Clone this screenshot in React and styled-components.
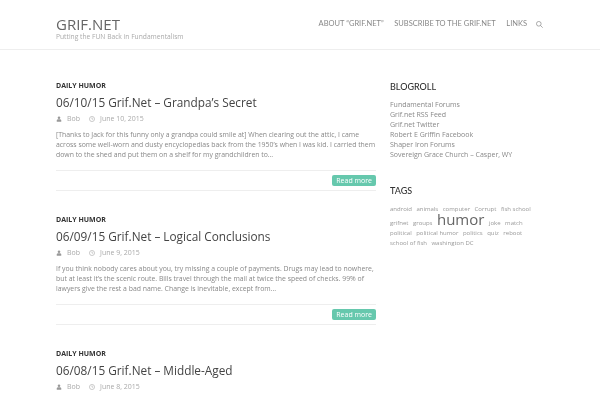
import React from "react";
import styled, { createGlobalStyle } from "styled-components";

const GlobalStyle = createGlobalStyle`
  html, body {
    margin: 0;
    height: 400px;
    overflow: hidden;
    background: #fff;
    font-family: "Open Sans", sans-serif;
  }
`;

const Page = styled.div`
  height: 400px;
  overflow: hidden;
  will-change: opacity;
`;

const Header = styled.header`
  height: 50px;
  box-sizing: border-box;
  padding: 15px 57px 0 56px;
  display: flex;
  justify-content: space-between;
  align-items: flex-start;
  border-bottom: 1px solid #eee;
`;

const Brand = styled.div`
  display: flex;
  flex-direction: column;
`;

const SiteTitle = styled.div`
  font-size: 15px;
  line-height: 18px;
  color: #666;
`;

const Tagline = styled.div`
  font-size: 6.7px;
  line-height: 8px;
  color: #aaa;
`;

const Nav = styled.nav`
  display: flex;
  align-items: center;
  gap: 10.5px;
  padding-top: 2px;
`;

const NavLink = styled.a`
  font-family: "Lato", sans-serif;
  font-size: 7.5px;
  line-height: 14px;
  color: #888;
  text-transform: uppercase;
`;

const SearchButton = styled.span`
  display: flex;
  margin-left: -1.5px;
`;

const Main = styled.main`
  display: grid;
  grid-template-columns: 320px 154px;
  gap: 14px;
  padding: 31px 56px 0;
`;

const Post = styled.article`
  height: 134px;
`;

const Category = styled.div`
  font-size: 7px;
  font-weight: 700;
  line-height: 10px;
  color: #333;
  text-transform: uppercase;
`;

const PostTitle = styled.h2`
  margin: 3px 0 0;
  font-size: 11.8px;
  font-weight: 400;
  line-height: 16px;
  color: #444;
`;

const Meta = styled.div`
  display: flex;
  align-items: center;
  gap: 5px;
  margin-top: 3.5px;
  font-size: 7px;
  line-height: 10px;
  color: #aaa;
`;

const MetaText = styled.span`
  margin-right: 4px;
`;

const Excerpt = styled.p`
  margin: 6.5px 0 0;
  font-size: 6.88px;
  line-height: 10px;
  color: #888;
`;

const ReadRow = styled.div`
  display: flex;
  justify-content: flex-end;
  align-items: center;
  height: 19px;
  margin-top: 10px;
  border-top: 1px solid #eee;
  border-bottom: 1px solid #eee;
`;

const ReadMore = styled.a`
  padding: 0 4px;
  border-radius: 2px;
  background: #66c8ad;
  color: #fff;
  font-size: 7px;
  line-height: 11px;
`;

const Sidebar = styled.aside`
  display: flex;
  flex-direction: column;
  gap: 25.5px;
`;

const WidgetTitle = styled.h3`
  margin: 0 0 6.5px;
  font-family: "Lato", sans-serif;
  font-size: 9px;
  font-weight: 500;
  line-height: 12px;
  color: #333;
  text-transform: uppercase;
`;

const LinkList = styled.ul`
  list-style: none;
  margin: 0;
  padding: 0;
`;

const LinkItem = styled.li`
  font-size: 7px;
  line-height: 10px;
  color: #888;
`;

const TagCloud = styled.div`
  display: flex;
  flex-wrap: wrap;
  align-items: baseline;
  column-gap: 4.5px;
  line-height: 10px;
`;

const Tag = styled.a`
  font-size: ${(p) => (p.$big ? "15px" : "6px")};
  line-height: ${(p) => (p.$big ? "11px" : "10px")};
  color: ${(p) => (p.$big ? "#666" : "#999")};
`;

const UserIcon = () => (
  <svg width="6" height="6" viewBox="0 0 8 8" fill="#999">
    <circle cx="4" cy="2.2" r="1.7" />
    <path d="M1 7.5V6c0-1 1-1.6 3-1.6S7 5 7 6v1.5z" />
  </svg>
);

const ClockIcon = () => (
  <svg width="6" height="6" viewBox="0 0 8 8" fill="none" stroke="#aaa" strokeWidth="0.8">
    <circle cx="4" cy="4" r="3.4" />
    <path d="M4 2v2.2h1.6" />
  </svg>
);

const SearchIcon = () => (
  <svg width="7" height="7" viewBox="0 0 9 9" fill="none" stroke="#888" strokeWidth="0.9">
    <circle cx="3.6" cy="3.6" r="3" />
    <path d="M5.8 5.8L8.6 8.6" />
  </svg>
);

const posts = [
  {
    title: "06/10/15 Grif.Net – Grandpa’s Secret",
    date: "June 10, 2015",
    excerpt:
      "[Thanks to Jack for this funny only a grandpa could smile at] When clearing out the attic, I came across some well-worn and dusty encyclopedias back from the 1950’s when I was kid. I carried them down to the shed and put them on a shelf for my grandchildren to…",
  },
  {
    title: "06/09/15 Grif.Net – Logical Conclusions",
    date: "June 9, 2015",
    excerpt:
      "If you think nobody cares about you, try missing a couple of payments. Drugs may lead to nowhere, but at least it’s the scenic route. Bills travel through the mail at twice the speed of checks. 99% of lawyers give the rest a bad name. Change is inevitable, except from…",
  },
  {
    title: "06/08/15 Grif.Net – Middle-Aged",
    date: "June 8, 2015",
    excerpt:
      "Middle-aged is when you choose your cereal for the fiber, not the toy. Middle-aged is when you know all the answers.",
  },
];

const links = [
  "Fundamental Forums",
  "Grif.net RSS Feed",
  "Grif.net Twitter",
  "Robert E Griffin Facebook",
  "Shaper Iron Forums",
  "Sovereign Grace Church – Casper, WY",
];

const tags = [
  "android", "animals", "computer", "Corrupt", "fish school", "grifnet", "groups", "humor",
  "joke", "match", "political", "political humor", "politics", "quiz", "reboot",
  "school of fish", "washington DC",
];

export default function App() {
  return (
    <Page>
      <GlobalStyle />
      <Header>
        <Brand>
          <SiteTitle>GRIF.NET</SiteTitle>
          <Tagline>Putting the FUN Back in Fundamentalism</Tagline>
        </Brand>
        <Nav>
          <NavLink>About “Grif.Net”</NavLink>
          <NavLink>Subscribe to the Grif.Net</NavLink>
          <NavLink>Links</NavLink>
          <SearchButton>
            <SearchIcon />
          </SearchButton>
        </Nav>
      </Header>
      <Main>
        <div>
          {posts.map((post) => (
            <Post key={post.title}>
              <Category>Daily Humor</Category>
              <PostTitle>{post.title}</PostTitle>
              <Meta>
                <UserIcon />
                <MetaText>Bob</MetaText>
                <ClockIcon />
                <MetaText>{post.date}</MetaText>
              </Meta>
              <Excerpt>{post.excerpt}</Excerpt>
              <ReadRow>
                <ReadMore>Read more</ReadMore>
              </ReadRow>
            </Post>
          ))}
        </div>
        <Sidebar>
          <div>
            <WidgetTitle>Blogroll</WidgetTitle>
            <LinkList>
              {links.map((l) => (
                <LinkItem key={l}>{l}</LinkItem>
              ))}
            </LinkList>
          </div>
          <div>
            <WidgetTitle>Tags</WidgetTitle>
            <TagCloud>
              {tags.map((t) => (
                <Tag key={t} $big={t === "humor"}>{t}</Tag>
              ))}
            </TagCloud>
          </div>
        </Sidebar>
      </Main>
    </Page>
  );
}
